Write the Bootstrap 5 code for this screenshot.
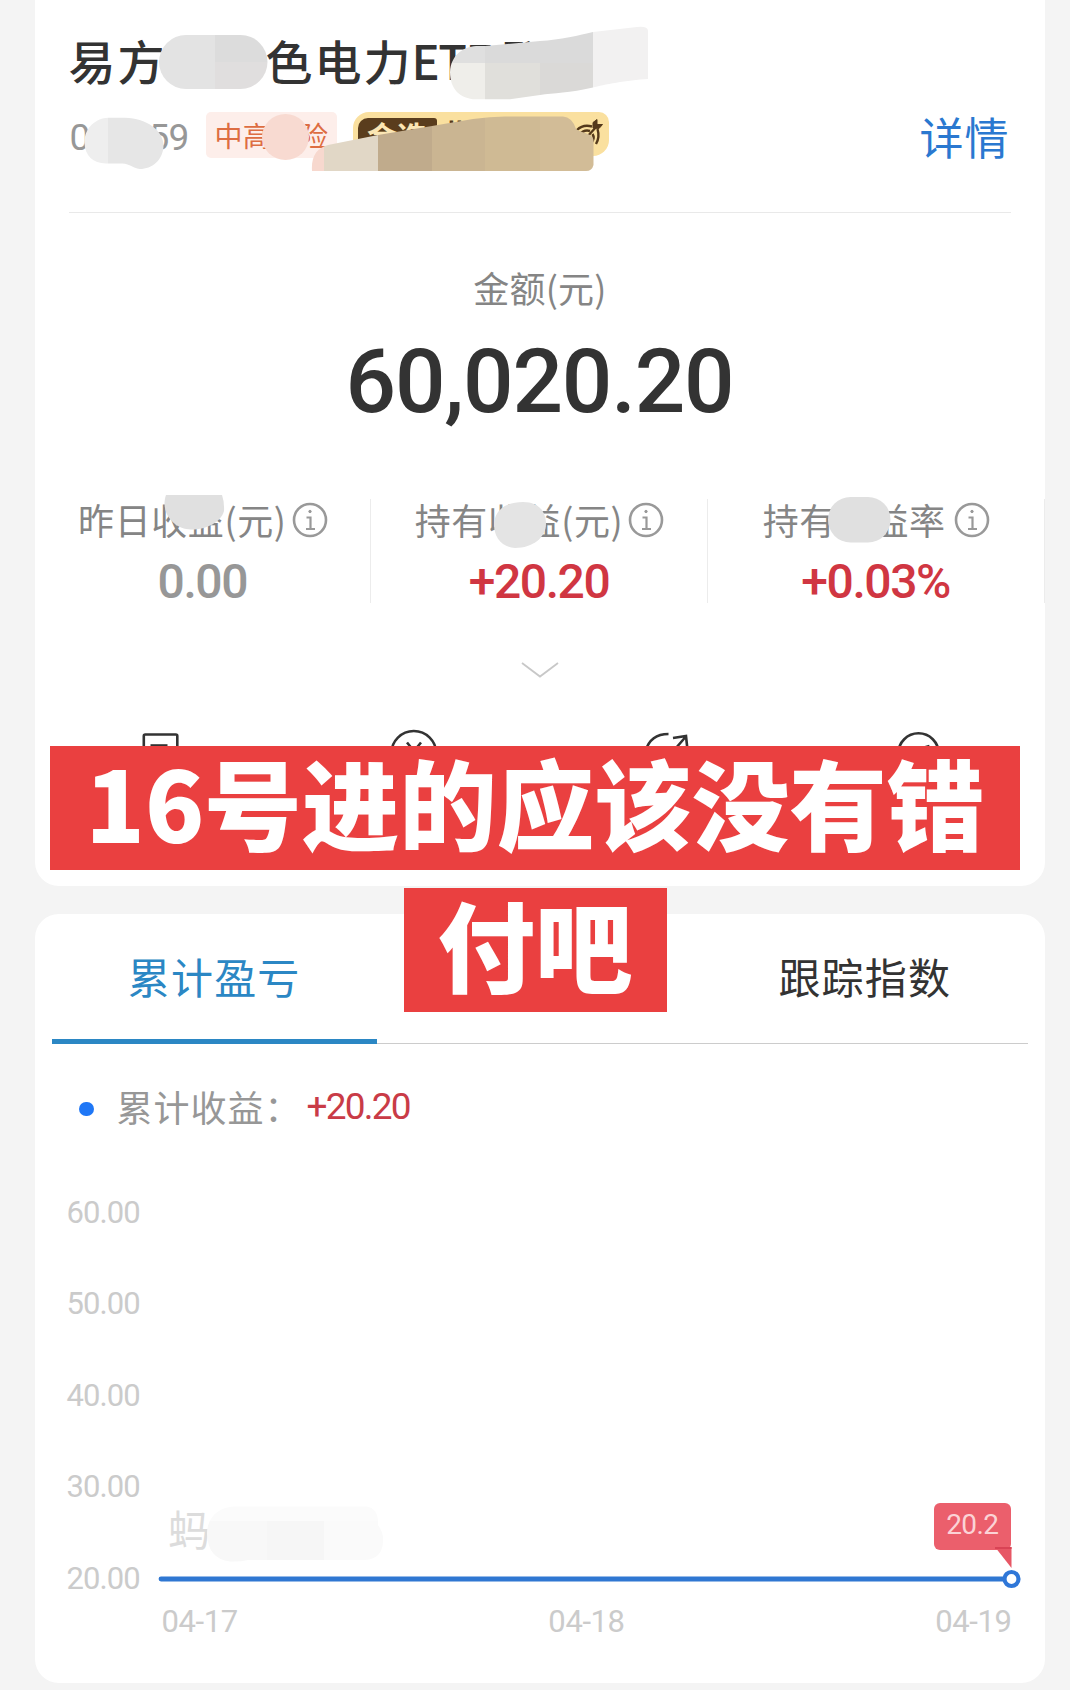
<!DOCTYPE html>
<html lang="zh-CN">
<head>
<meta charset="utf-8">
<meta name="viewport" content="width=device-width, initial-scale=1">
<title>基金持有详情</title>
<link href="https://cdn.jsdelivr.net/npm/bootstrap@5.3.0/dist/css/bootstrap.min.css" rel="stylesheet">
<style>
html,body{background:#f4f4f4}
body{width:1070px;height:1690px;overflow:hidden;font-family:"Noto Sans CJK SC",sans-serif;color:#333}
.page{padding:0 25.5px 7px 34.5px;height:1690px}
.panel{background:#fff;border:0;border-radius:0 0 24px 24px;display:block}
.panel-top{height:886px}
.panel-chart{height:769px;margin-top:28px;border-radius:24px}
.num{font-family:Roboto,sans-serif;white-space:nowrap}
.fund-head{height:212px;margin:0 34px 0 34px;padding-top:27px}
.fund-name{font-size:47px;line-height:66px;height:66px;letter-spacing:2px;font-weight:500;white-space:nowrap}
.gap-name{width:99px}
.latin{letter-spacing:-1.4px;margin-left:-1px}
.latin+span{margin-left:12px}
.meta{height:46px;margin-top:19px}
.code{font-size:37px;line-height:51px;color:#979797;letter-spacing:-.8px;width:137px;padding-left:1px}
.gap-code{width:59px}
.risk{width:131.5px;height:46px;background:#fdeeea;border-radius:5px;color:#dd6d42;font-size:28px;line-height:46px;padding-left:9px;letter-spacing:.3px}
.gap-risk{width:29px}
.pick{width:256px;height:44px;margin-left:16px;background:#fae09f;border-radius:16px 10px 16px 4px;color:#54391b;font-weight:700;font-size:29px;line-height:42px}
.pick-tag{width:79px;height:36px;margin:6px 0 0 5px;background:#5a3d1d;color:#fbe6b4;border-radius:10px 3px 0 0;padding-left:9px;line-height:34px;font-size:30px}
.detail{font-size:44px;line-height:48px;color:#2a78d0;letter-spacing:1px;margin-right:1px}
.rule{height:1px;background:#e9e9e9;margin:0 34px}
.amount-label{font-size:36px;line-height:50px;color:#858585;letter-spacing:.2px;margin-top:49px;padding-left:1px}
.amount{font-size:89px;line-height:90px;font-weight:500;letter-spacing:-1.2px;margin-top:25px}
.stats{margin-top:72px;height:104px}
.stat{flex:1 1 0;border-right:1.5px solid #ececec}
.stat-label{font-size:36px;line-height:40px;height:40px;color:#858585;letter-spacing:.6px;white-space:nowrap;padding-left:1px}
.stat-label svg{margin:2px 0 0 5px}
.stat-value{font-size:48px;line-height:50px;font-weight:500;letter-spacing:-1.4px;margin-top:17.5px}
.red{color:#d03642}.grey{color:#979797}
.chev{margin-top:58px;height:18px}
.actions{margin-top:50px;height:60px}
.tabs{margin:0 17px;height:130px;border-bottom:1px solid #ccc}
.tab-item{flex:1 1 0;font-size:42px;line-height:50px;letter-spacing:1.2px;padding-top:36.5px;height:130px}
.tab-on{color:#2b87c4;border-bottom:5px solid #2b87c4}
.legend{margin:36px 0 0 44.5px;height:52px}
.dot{width:14.5px;height:14.5px;border-radius:50%;background:#1f77f6;margin-top:6px}
.legend-text{font-size:36px;line-height:48px;color:#979797;letter-spacing:1px;margin-left:23px;width:190px;white-space:nowrap}
.legend-num{font-size:37px;line-height:48px;color:#c93b47;letter-spacing:-1.8px;padding-top:2px}
.chart{margin:0 31px 0 32px}
.ticks{padding-top:63px}
.tick{font-size:31px;line-height:36px;height:91.4px;color:#cbcbcb;letter-spacing:-.9px}
.tick:last-of-type{height:36px}
.plot{height:20px;margin:-28px 0 0 89px}
.dates{font-size:31px;line-height:36px;color:#cbcbcb;letter-spacing:-.4px;margin:15px 2px 0 95px}
.layer{left:0;top:0;pointer-events:none}
.mark-text{left:168px;top:1498px;font-size:42px;line-height:60px;color:#dcdcdc}
.tip{left:933.5px;top:1502.5px;width:77.5px;height:47.5px;background:#eb5f6c;border-radius:6px;color:#fbd3d6;font-size:28px;line-height:44px;text-align:center;letter-spacing:-.6px}
.tip svg{left:61px;top:44px}
.caption{top:745.7px;left:0;width:1070px}
.cap-line{background:#ea4040;color:#fff;font-weight:900;font-size:97.5px;line-height:110px;height:124.3px;white-space:nowrap;text-align:center}
.cap-a{width:970px}.cap-b{width:263px;margin-top:18.2px}
</style>
</head>
<body>
<main class="page">
  <section class="panel panel-top">
    <div class="fund-head">
      <div class="fund-name d-flex"><span>易方</span><span class="gap-name"></span><span>色电力</span><span class="latin">ETF</span><span>联</span></div>
      <div class="meta d-flex">
        <div class="code num d-flex"><span>0</span><span class="gap-code"></span><span>59</span></div>
        <div class="risk d-flex"><span>中高</span><span class="gap-risk"></span><span>险</span></div>
        <div class="pick d-flex"><span class="pick-tag">金选</span><span class="ms-2">指数</span>
          <svg class="ms-auto mt-1 align-self-start" width="36" height="36" viewBox="573 116 36 36" fill="none" stroke="#54391b" stroke-width="2.4"><path d="M577 130Q583 124 592 126.500M579 135Q584 129 590 131M597.500 129Q600 137 596 144M592.500 134Q595 138 592 142M587 137 597 126"/><path d="M593 128V122.500L597 119.500V124.500H602.500L599 128.500Z" fill="#54391b" stroke-width="1"/></svg>
        </div>
        <a class="detail ms-auto text-decoration-none">详情</a>
      </div>
    </div>
    <div class="rule"></div>
    <div class="amount-label text-center">金额(元)</div>
    <div class="amount num text-center">60,020.20</div>
    <div class="stats d-flex text-center">
      <div class="stat"><div class="stat-label d-flex justify-content-center align-items-center"><span>昨日收益(元)</span><svg width="36" height="36" viewBox="0 0 36 36" fill="none" stroke="#999" stroke-width="2.6"><circle cx="18" cy="18" r="16"/><path d="M14.500 15.500H18.500V26.500M14 27H23" stroke-width="2.2"/><circle cx="18" cy="9.500" r="1.200" fill="#999" stroke-width="1"/></svg></div><div class="stat-value num grey">0.00</div></div>
      <div class="stat"><div class="stat-label d-flex justify-content-center align-items-center"><span>持有收益(元)</span><svg width="36" height="36" viewBox="0 0 36 36" fill="none" stroke="#999" stroke-width="2.6"><circle cx="18" cy="18" r="16"/><path d="M14.500 15.500H18.500V26.500M14 27H23" stroke-width="2.2"/><circle cx="18" cy="9.500" r="1.200" fill="#999" stroke-width="1"/></svg></div><div class="stat-value num red">+20.20</div></div>
      <div class="stat"><div class="stat-label d-flex justify-content-center align-items-center"><span>持有收益率</span><svg class="ms-2" width="36" height="36" viewBox="0 0 36 36" fill="none" stroke="#999" stroke-width="2.6"><circle cx="18" cy="18" r="16"/><path d="M14.500 15.500H18.500V26.500M14 27H23" stroke-width="2.2"/><circle cx="18" cy="9.500" r="1.200" fill="#999" stroke-width="1"/></svg></div><div class="stat-value num red">+0.03%</div></div>
    </div>
    <div class="chev d-flex justify-content-center"><svg width="40" height="18" viewBox="0 0 40 18" fill="none" stroke="#c8c8c8" stroke-width="1.8"><path d="M2 2 20 15.500 38 2"/></svg></div>
    <div class="actions d-flex"><svg width="1010" height="60" viewBox="34.500 729 1010 60" fill="none" stroke="#333" stroke-width="2.6"><rect x="143.300" y="734.500" width="33.500" height="40" rx="1.500"/><path d="M150 745.500H167"/><circle cx="413.300" cy="753.500" r="22.500"/><path d="M406.500 742.500 413.500 751 420.500 742.500"/><path d="M645 751Q650 734 668 734M672.500 738 685.500 736 687 750M685 737 672 752"/><circle cx="918" cy="753.500" r="20.200"/><path d="M922 748 929 746"/></svg></div>
  </section>

  <section class="panel panel-chart">
    <div class="tabs d-flex text-center">
      <div class="tab-item tab-on">累计盈亏</div>
      <div class="tab-item"></div>
      <div class="tab-item">跟踪指数</div>
    </div>
    <div class="legend d-flex align-items-center"><span class="dot"></span><span class="legend-text">累计收益：</span><span class="legend-num num">+20.20</span></div>
    <div class="chart ticks num">
      <div class="tick">60.00</div><div class="tick">50.00</div><div class="tick">40.00</div><div class="tick">30.00</div><div class="tick">20.00</div>
    </div>
    <div class="chart">
      <div class="plot"><svg class="d-block" width="870" height="20" viewBox="155.500 1568.500 870 20"><path d="M160.500 1578.500H1003" stroke="#2f77d2" stroke-width="4.800" stroke-linecap="round"/><circle cx="1011" cy="1578.500" r="7" fill="#fff" stroke="#2f77d8" stroke-width="4.200"/></svg></div>
      <div class="dates num d-flex justify-content-between"><span>04-17</span><span>04-18</span><span>04-19</span></div>
    </div>
  </section>
</main>

<div class="mark-text position-absolute">蚂</div>
<div class="tip num position-absolute">20.2<svg class="position-absolute" width="17" height="21"><path d="M0 0H16.500V21Z" fill="#e75765"/><path d="M0 1H16.500" stroke="#d94355" stroke-width="2"/></svg></div>

<!-- privacy masks over the private parts of the text -->
<svg class="layer position-absolute" width="1070" height="1690" viewBox="0 0 1070 1690">
  <defs>
    <clipPath id="m1"><rect x="159" y="35" width="108.500" height="54" rx="27"/></clipPath>
    <clipPath id="m2"><path d="M450 72C451 55 463 47 476 46L485 46 540 41C560 40 580 35 593 32L637 27Q648 26 648 31V79C627 80 603 85 593 87.500 570 93 553 93 540 95L510 99.300H476C460 99 450 89 450 72Z"/></clipPath>
    <clipPath id="m3"><path d="M84.500 143C84 127 97 118 108 117.700H125C147 118 164 131 163.500 146 163 160 152 169 140 169 132 168 131 164 122 163.500H106C93 163 85 156 84.500 143Z"/></clipPath>
    <clipPath id="m4"><path d="M312 171C311 156 317 148 328 145L378 135 432 126 473 119Q490 116.500 505 116.500H563Q572 117 576 129C581 133 593 133 593.500 140V165Q592 171 586 171Z"/></clipPath>
    <clipPath id="m5"><path d="M207 1534C207 1516 220 1507 234 1506.500H366Q379 1508 378 1525 384 1533 383 1542 382 1559 365 1560H248Q240 1562 230 1561.500 208 1559 207 1534Z"/></clipPath>
  </defs>
  <g clip-path="url(#m1)"><path fill="#e3e3e3" d="M159 35h56v54h-56z"/><path fill="#dcdcdc" d="M215 35h53v27h-53z"/><path fill="#e0dede" d="M215 62h53v27h-53z"/></g>
  <g clip-path="url(#m2)"><path fill="#dfdfdf" d="M449 26h36v37h-36z"/><path fill="#dadada" d="M485 26h108v37H485z"/><path fill="#efeeea" d="M449 63h36v37h-36z"/><path fill="#e0dfdb" d="M485 63h55v37h-55z"/><path fill="#dad9d7" d="M540 63h53v37h-53z"/><path fill="#f2f1f1" d="M593 26h56v74h-56z"/></g>
  <g clip-path="url(#m3)"><path fill="#eee" d="M84 117h24v53H84z"/><path fill="#e6e6e6" d="M108 117h56v53h-56z"/></g>
  <ellipse cx="285.500" cy="137" rx="23.500" ry="23" fill="#f8dad1"/>
  <g clip-path="url(#m4)"><path fill="#f7d8ce" d="M311 116h13v56h-13z"/><path fill="#e1d7c6" d="M324 116h54v56h-54z"/><path fill="#c0ab8c" d="M378 116h54v56h-54z"/><path fill="#cab592" d="M432 116h53v56h-53z"/><path fill="#cfba94" d="M485 116h55v56h-55z"/><path fill="#d2bc97" d="M540 116h55v56h-55z"/></g>
  <path fill="#e0e0e0" d="M166 495H222Q224.500 502 224 511C221 522 207 529.500 191 529.500 173 529 160 512 166 495Z"/>
  <path fill="#e4e4e4" d="M494 524C495 509 507 502 523 502 539 502 546 512 546 524 546 537 533 548 515 548 501 547 494 537 494 524Z"/>
  <rect x="828" y="497" width="62.500" height="45.500" rx="22.500" fill="#e0e0e0"/>
  <g clip-path="url(#m5)"><path fill="#fbfbfb" d="M206 1506h178v15H206z"/><path fill="#f8f8f8" d="M206 1521h61v42h-61z"/><path fill="#f6f6f6" d="M267 1521h57v42h-57z"/><path fill="#fafafa" d="M324 1521h60v42h-60z"/></g>
</svg>

<div class="caption position-absolute d-flex flex-column align-items-center">
  <div class="cap-line cap-a">16号进的应该没有错</div>
  <div class="cap-line cap-b">付吧</div>
</div>
<script src="https://cdn.jsdelivr.net/npm/bootstrap@5.3.0/dist/js/bootstrap.bundle.min.js"></script>
</body>
</html>
